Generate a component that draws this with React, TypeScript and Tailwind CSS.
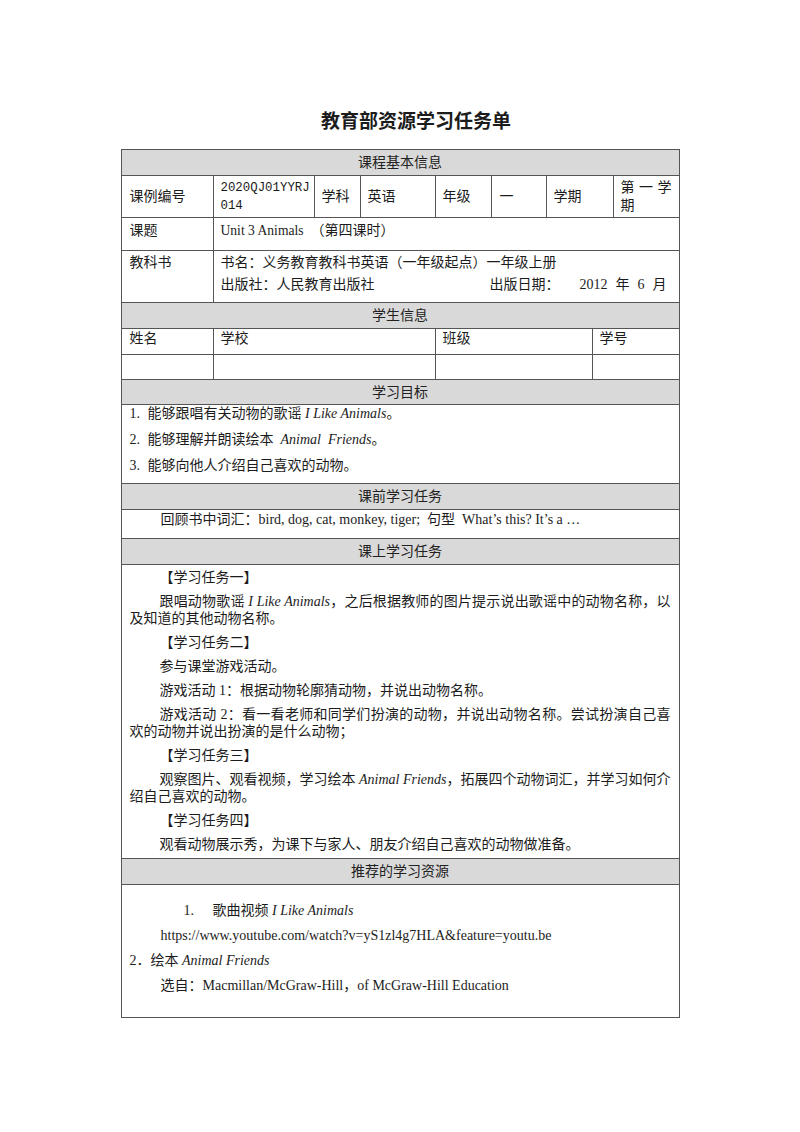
import { ReactNode } from 'react';

const font = 'font-["Liberation_Serif","Noto_Sans_CJK_SC",serif]';

function Header({ children, h = 'h-[26px]' }: { children: ReactNode; h?: string }) {
  return (
    <div className={`${h} flex items-center justify-center bg-[#d9d9d9] border-b border-[#555] text-[14px] text-[#222]`}>
      {children}
    </div>
  );
}

function I({ children }: { children: ReactNode }) {
  return <span className="italic">{children}</span>;
}

// one justified first line followed by the wrapped rest
function Para({ first, rest }: { first: ReactNode; rest?: ReactNode }) {
  return (
    <div>
      <div className={`indent-[30px] ${rest ? 'text-justify [text-align-last:justify]' : ''}`}>{first}</div>
      {rest && <div>{rest}</div>}
    </div>
  );
}

export default function App() {
  return (
    <div className={`${font} min-h-[1132px] bg-white pt-[108px] text-[#1c1c1c]`}>
      <h1 className="text-center pl-[32px] text-[19px] leading-[24px] font-bold font-['Noto_Sans_CJK_SC',sans-serif] mb-[17px]">
        教育部资源学习任务单
      </h1>

      <div className="mx-auto w-[559px] border border-[#555] text-[14px]">
        <Header>课程基本信息</Header>

        <div className="grid grid-cols-[91px_101px_46px_75px_56px_55px_67px_66px] h-[42px] border-b border-[#555] leading-[18px]">
          <div className="flex items-center pl-2">课例编号</div>
          <div className="flex flex-col justify-center border-l border-[#555] pl-[7px] font-['Liberation_Mono',monospace] text-[12.4px] leading-[18px]">
            <span>2020QJ01YYRJ</span>
            <span>014</span>
          </div>
          <div className="flex items-center border-l border-[#555] pl-[7px]">学科</div>
          <div className="flex items-center border-l border-[#555] pl-[7px]">英语</div>
          <div className="flex items-center border-l border-[#555] pl-[7px]">年级</div>
          <div className="flex items-center border-l border-[#555] pl-[8px]">一</div>
          <div className="flex items-center border-l border-[#555] pl-[7px]">学期</div>
          <div className="flex flex-col justify-center border-l border-[#555] pl-[7px] pr-[7px] leading-[18px]">
            <span className="flex justify-between"><span>第</span><span>一</span><span>学</span></span>
            <span>期</span>
          </div>
        </div>

        <div className="grid grid-cols-[91px_1fr] h-[33px] border-b border-[#555] leading-[20px]">
          <div className="pl-2 pt-[3px]">课题</div>
          <div className="border-l border-[#555] pl-[7px] pt-[3px]">
            <span className="text-[13.6px]">Unit 3 Animals</span>&nbsp;&nbsp;（第四课时）
          </div>
        </div>

        <div className="grid grid-cols-[91px_1fr] h-[52px] border-b border-[#555] leading-[22px]">
          <div className="pl-2 pt-[1px]">教科书</div>
          <div className="border-l border-[#555] pl-[7px] pt-[1px]">
            <div>书名：义务教育教科书英语（一年级起点）一年级上册</div>
            <div className="flex">
              <span className="w-[269px]">出版社：人民教育出版社</span>
              <span>出版日期：</span>
              <span className="ml-[20px] flex gap-[8px]">
                <span>2012</span>
                <span>年</span>
                <span>6</span>
                <span>月</span>
              </span>
            </div>
          </div>
        </div>

        <Header>学生信息</Header>

        <div className="grid grid-cols-[91px_222px_157px_1fr] h-[26px] border-b border-[#555] leading-[20px]">
          <div className="pl-2">姓名</div>
          <div className="border-l border-[#555] pl-[7px]">学校</div>
          <div className="border-l border-[#555] pl-[7px]">班级</div>
          <div className="border-l border-[#555] pl-[7px]">学号</div>
        </div>
        <div className="grid grid-cols-[91px_222px_157px_1fr] h-[25px] border-b border-[#555]">
          <div />
          <div className="border-l border-[#555]" />
          <div className="border-l border-[#555]" />
          <div className="border-l border-[#555]" />
        </div>

        <Header h="h-[25px]">学习目标</Header>

        <div className="h-[79px] border-b border-[#555] pl-2 leading-[18px] flex flex-col gap-[8px]">
          <div className="flex">
            <span className="w-[18px]">1.</span>
            <span>能够跟唱有关动物的歌谣 <I>I Like Animals</I>。</span>
          </div>
          <div className="flex">
            <span className="w-[18px]">2.</span>
            <span>能够理解并朗读绘本&nbsp;&nbsp;<I>Animal&nbsp;&nbsp;Friends</I>。</span>
          </div>
          <div className="flex">
            <span className="w-[18px]">3.</span>
            <span>能够向他人介绍自己喜欢的动物。</span>
          </div>
        </div>

        <Header>课前学习任务</Header>

        <div className="h-[29px] border-b border-[#555] pl-2 leading-[20px]">
          <div className="indent-[31px]">
            回顾书中词汇：bird, dog, cat, monkey, tiger;&nbsp;&nbsp;句型&nbsp;&nbsp;What’s this? It’s a …
          </div>
        </div>

        <Header>课上学习任务</Header>

        <div className="h-[294px] border-b border-[#555] pl-2 pr-2 pt-[4px] leading-[17px] flex flex-col gap-[7px]">
          <Para first="【学习任务一】" />
          <Para
            first={<>跟唱动物歌谣 <I>I Like Animals</I>，之后根据教师的图片提示说出歌谣中的动物名称，以</>}
            rest="及知道的其他动物名称。"
          />
          <Para first="【学习任务二】" />
          <Para first="参与课堂游戏活动。" />
          <Para first="游戏活动 1：根据动物轮廓猜动物，并说出动物名称。" />
          <Para
            first="游戏活动 2：看一看老师和同学们扮演的动物，并说出动物名称。尝试扮演自己喜"
            rest="欢的动物并说出扮演的是什么动物；"
          />
          <Para first="【学习任务三】" />
          <Para
            first={<>观察图片、观看视频，学习绘本 <I>Animal Friends</I>，拓展四个动物词汇，并学习如何介</>}
            rest="绍自己喜欢的动物。"
          />
          <Para first="【学习任务四】" />
          <Para first="观看动物展示秀，为课下与家人、朋友介绍自己喜欢的动物做准备。" />
        </div>

        <Header>推荐的学习资源</Header>

        <div className="h-[132px] pl-2 pt-[13px] leading-[25px]">
          <div className="flex pl-[54px]">
            <span className="w-[29px]">1.</span>
            <span>歌曲视频 <I>I Like Animals</I></span>
          </div>
          <div className="pl-[31px]">https://www.youtube.com/watch?v=yS1zl4g7HLA&amp;feature=youtu.be</div>
          <div>2．绘本 <I>Animal Friends</I></div>
          <div className="pl-[31px]">选自：Macmillan/McGraw-Hill，of McGraw-Hill Education</div>
        </div>
      </div>
    </div>
  );
}
